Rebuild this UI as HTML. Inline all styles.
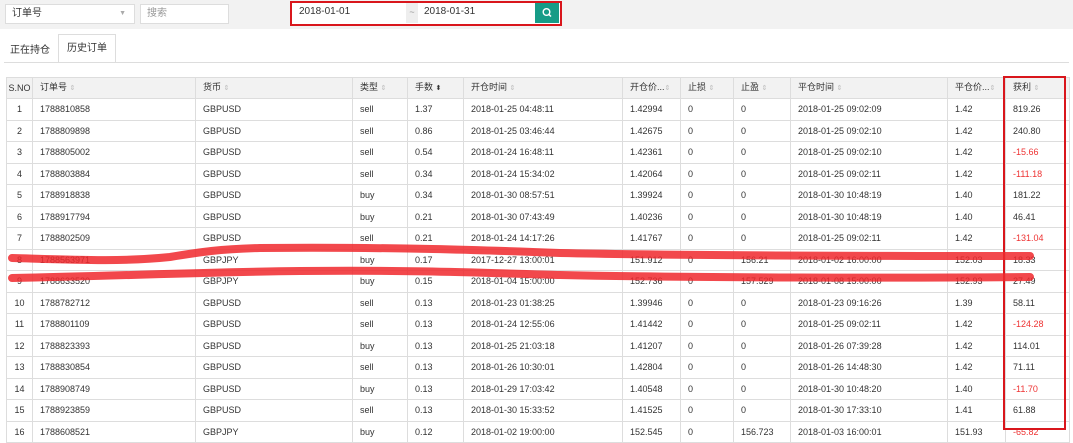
<!DOCTYPE html>
<html><head><meta charset="utf-8"><style>
*{box-sizing:border-box;margin:0;padding:0}
body{width:1073px;height:442px;overflow:hidden;background:#fff;font-family:"Liberation Sans","Noto Sans CJK SC",sans-serif;font-size:9px;color:#333;position:relative}
.top{position:absolute;left:0;top:0;width:1073px;height:29px;background:#f2f2f2}
.box{position:absolute;background:#fff;border:1px solid #ddd;height:20px;line-height:18px;padding-left:6px;font-size:10px}
table{position:absolute;left:6px;top:77px;border-collapse:collapse;table-layout:fixed;width:1063px}
td,th{border:1px solid #ddd;padding:0 0 0 7px;font-weight:normal;text-align:left;white-space:nowrap;overflow:hidden;line-height:10px}
tr{height:21.53px}
th{background:#f2f2f2}
tr.h{height:21px}
td:first-child,th:first-child{padding-left:0;text-align:center}
.r{color:#e33}
.s{color:#bbb;font-size:7px}
</style></head><body>
<div class="top"></div>
<div class="box" style="left:5px;top:4px;width:130px">订单号<span style="position:absolute;right:8px;color:#aaa;font-size:7px">▼</span></div>
<div class="box" style="left:140px;top:4px;width:89px;color:#999">搜索</div>
<div style="position:absolute;left:290px;top:1px;width:272px;height:25px;border:2px solid #d9161c;background:#fff"></div>
<div class="box" style="left:293px;top:3px;width:113px;border:none">2018-01-01</div>
<div style="position:absolute;left:406px;top:3px;width:12px;height:20px;background:#eee;color:#999;text-align:center;line-height:18px">~</div>
<div class="box" style="left:418px;top:3px;width:117px;border:none">2018-01-31</div>
<div style="position:absolute;left:535px;top:3px;width:24px;height:20px;background:#169c87"><svg width="24" height="20"><circle cx="11.5" cy="9" r="3.3" fill="none" stroke="#fff" stroke-width="1.4"/><line x1="14" y1="11.5" x2="16" y2="13.5" stroke="#fff" stroke-width="1.5"/></svg></div>
<div style="position:absolute;left:10px;top:41px;font-size:10px">正在持仓</div>
<div style="position:absolute;left:58px;top:34px;width:58px;height:29px;border:1px solid #ddd;border-bottom:none;background:#fff;font-size:10px;text-align:center;line-height:27px">历史订单</div>
<div style="position:absolute;left:4px;top:62px;width:1065px;border-top:1px solid #ddd"></div>
<table>
<colgroup><col style="width:26px"><col style="width:163px"><col style="width:157px"><col style="width:55px"><col style="width:56px"><col style="width:159px"><col style="width:58px"><col style="width:53px"><col style="width:57px"><col style="width:157px"><col style="width:58px"><col style="width:64px"></colgroup>
<tr class="h"><th>S.NO</th><th>订单号 <span class="s">⇕</span></th><th>货币 <span class="s">⇕</span></th><th>类型 <span class="s">⇕</span></th><th>手数 <span style="font-size:7px">⬍</span></th><th>开仓时间 <span class="s">⇕</span></th><th>开仓价...<span class="s">⇕</span></th><th>止损 <span class="s">⇕</span></th><th>止盈 <span class="s">⇕</span></th><th>平仓时间 <span class="s">⇕</span></th><th>平仓价...<span class="s">⇕</span></th><th>获利 <span class="s">⇕</span></th></tr>
<tr><td>1</td><td>1788810858</td><td>GBPUSD</td><td>sell</td><td>1.37</td><td>2018-01-25 04:48:11</td><td>1.42994</td><td>0</td><td>0</td><td>2018-01-25 09:02:09</td><td>1.42</td><td>819.26</td></tr>
<tr><td>2</td><td>1788809898</td><td>GBPUSD</td><td>sell</td><td>0.86</td><td>2018-01-25 03:46:44</td><td>1.42675</td><td>0</td><td>0</td><td>2018-01-25 09:02:10</td><td>1.42</td><td>240.80</td></tr>
<tr><td>3</td><td>1788805002</td><td>GBPUSD</td><td>sell</td><td>0.54</td><td>2018-01-24 16:48:11</td><td>1.42361</td><td>0</td><td>0</td><td>2018-01-25 09:02:10</td><td>1.42</td><td class="r">-15.66</td></tr>
<tr><td>4</td><td>1788803884</td><td>GBPUSD</td><td>sell</td><td>0.34</td><td>2018-01-24 15:34:02</td><td>1.42064</td><td>0</td><td>0</td><td>2018-01-25 09:02:11</td><td>1.42</td><td class="r">-111.18</td></tr>
<tr><td>5</td><td>1788918838</td><td>GBPUSD</td><td>buy</td><td>0.34</td><td>2018-01-30 08:57:51</td><td>1.39924</td><td>0</td><td>0</td><td>2018-01-30 10:48:19</td><td>1.40</td><td>181.22</td></tr>
<tr><td>6</td><td>1788917794</td><td>GBPUSD</td><td>buy</td><td>0.21</td><td>2018-01-30 07:43:49</td><td>1.40236</td><td>0</td><td>0</td><td>2018-01-30 10:48:19</td><td>1.40</td><td>46.41</td></tr>
<tr><td>7</td><td>1788802509</td><td>GBPUSD</td><td>sell</td><td>0.21</td><td>2018-01-24 14:17:26</td><td>1.41767</td><td>0</td><td>0</td><td>2018-01-25 09:02:11</td><td>1.42</td><td class="r">-131.04</td></tr>
<tr><td>8</td><td>1788563971</td><td>GBPJPY</td><td>buy</td><td>0.17</td><td>2017-12-27 13:00:01</td><td>151.912</td><td>0</td><td>156.21</td><td>2018-01-02 16:00:00</td><td>152.03</td><td>18.33</td></tr>
<tr><td>9</td><td>1788633520</td><td>GBPJPY</td><td>buy</td><td>0.15</td><td>2018-01-04 15:00:00</td><td>152.736</td><td>0</td><td>157.529</td><td>2018-01-08 15:00:00</td><td>152.93</td><td>27.49</td></tr>
<tr><td>10</td><td>1788782712</td><td>GBPUSD</td><td>sell</td><td>0.13</td><td>2018-01-23 01:38:25</td><td>1.39946</td><td>0</td><td>0</td><td>2018-01-23 09:16:26</td><td>1.39</td><td>58.11</td></tr>
<tr><td>11</td><td>1788801109</td><td>GBPUSD</td><td>sell</td><td>0.13</td><td>2018-01-24 12:55:06</td><td>1.41442</td><td>0</td><td>0</td><td>2018-01-25 09:02:11</td><td>1.42</td><td class="r">-124.28</td></tr>
<tr><td>12</td><td>1788823393</td><td>GBPUSD</td><td>buy</td><td>0.13</td><td>2018-01-25 21:03:18</td><td>1.41207</td><td>0</td><td>0</td><td>2018-01-26 07:39:28</td><td>1.42</td><td>114.01</td></tr>
<tr><td>13</td><td>1788830854</td><td>GBPUSD</td><td>sell</td><td>0.13</td><td>2018-01-26 10:30:01</td><td>1.42804</td><td>0</td><td>0</td><td>2018-01-26 14:48:30</td><td>1.42</td><td>71.11</td></tr>
<tr><td>14</td><td>1788908749</td><td>GBPUSD</td><td>buy</td><td>0.13</td><td>2018-01-29 17:03:42</td><td>1.40548</td><td>0</td><td>0</td><td>2018-01-30 10:48:20</td><td>1.40</td><td class="r">-11.70</td></tr>
<tr><td>15</td><td>1788923859</td><td>GBPUSD</td><td>sell</td><td>0.13</td><td>2018-01-30 15:33:52</td><td>1.41525</td><td>0</td><td>0</td><td>2018-01-30 17:33:10</td><td>1.41</td><td>61.88</td></tr>
<tr><td>16</td><td>1788608521</td><td>GBPJPY</td><td>buy</td><td>0.12</td><td>2018-01-02 19:00:00</td><td>152.545</td><td>0</td><td>156.723</td><td>2018-01-03 16:00:01</td><td>151.93</td><td class="r">-65.82</td></tr>
</table>
<div style="position:absolute;left:1003px;top:76px;width:63px;height:354px;border:2px solid #d9161c"></div>
<svg style="position:absolute;left:0;top:0" width="1073" height="442"><g fill="none" stroke="#f0282d" stroke-opacity=".85" stroke-width="8" stroke-linecap="round">
<path d="M12 258 C80 260 120 262 170 257 C200 252 220 249 260 248 C400 247 480 250 560 253 C700 256 900 256 1030 256"/>
<path d="M12 278 C120 276 200 272 300 271 C400 270 460 272 560 275 C700 278 900 278 1030 277"/></g></svg>
</body></html>
